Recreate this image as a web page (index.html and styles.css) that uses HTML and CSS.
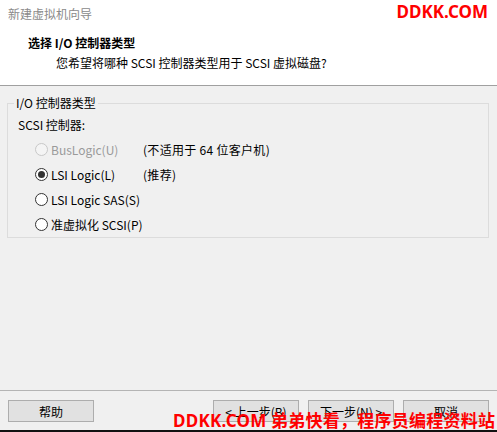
FILE: index.html
```html
<!DOCTYPE html>
<html lang="zh-CN">
<head>
  <meta charset="UTF-8">
  <title>新建虚拟机向导</title>
  <link rel="stylesheet" href="styles.css">
</head>
<body>
  <header>
    <div class="title">新建虚拟机向导</div>
    <div class="logo">DDKK.COM</div>
    <div class="heading">选择 I/O 控制器类型</div>
    <div class="subtitle">您希望将哪种 SCSI 控制器类型用于 SCSI 虚拟磁盘?</div>
  </header>

  <main>
    <fieldset class="group">
      <legend>I/O 控制器类型</legend>
      <div class="label">SCSI 控制器:</div>
      <div class="option disabled">
        <span class="radio"></span><span class="name">BusLogic(U)</span><span class="note">(不适用于 64 位客户机)</span>
      </div>
      <div class="option">
        <span class="radio checked"></span><span class="name">LSI Logic(L)</span><span class="note">(推荐)</span>
      </div>
      <div class="option">
        <span class="radio"></span><span class="name">LSI Logic SAS(S)</span>
      </div>
      <div class="option">
        <span class="radio"></span><span class="name">准虚拟化 SCSI(P)</span>
      </div>
    </fieldset>
  </main>

  <footer>
    <button>帮助</button>
    <div class="nav">
      <button>&lt; 上一步(B)</button>
      <button>下一步(N) &gt;</button>
      <button>取消</button>
    </div>
  </footer>
  <div class="watermark">DDKK.COM 弟弟快看，程序员编程资料站</div>
</body>
</html>
```

FILE: styles.css
```css
* {
  box-sizing: border-box;
}
html, body {
  height: 100%;
}
body {
  margin: 0;
  height: 432px;
  font-family: "Noto Sans CJK SC", sans-serif;
  font-size: 12px;
  line-height: 16px;
  color: #000;
  background: #f0f0f0;
  display: flex;
  flex-direction: column;
  position: relative;
  overflow: hidden;
  border-bottom: 2px solid #111;
}
header {
  background: #fff;
  height: 86px;
  border-bottom: 1px solid #a0a0a0;
  padding: 6px 8px 0;
  position: relative;
}
.title {
  color: #8a8a8a;
}
.logo {
  position: absolute;
  top: 2px;
  right: 9px;
  font-family: "Noto Sans", sans-serif;
  font-weight: bold;
  font-size: 17px;
  line-height: 20px;
  color: #ff0000;
}
.heading {
  margin-top: 13px;
  padding-left: 20px;
  font-weight: bold;
}
.subtitle {
  margin-top: 4px;
  padding-left: 48px;
}
main {
  flex: 1;
}
.group {
  margin: 9px 8px 0 7px;
  padding: 0 0 0 10px;
  border: 1px solid #dcdcdc;
  height: 143px;
}
.group legend {
  padding: 0 2px;
  margin-left: -4px;
  line-height: 16px;
}
.label {
  margin-top: 6px;
  margin-bottom: 4px;
}
.option {
  height: 25px;
  display: flex;
  align-items: center;
  padding-left: 17px;
}
.radio {
  width: 13px;
  height: 13px;
  border: 1px solid #333;
  border-radius: 50%;
  background: #fff;
  margin-right: 3px;
  display: flex;
  align-items: center;
  justify-content: center;
  flex: none;
}
.radio.checked::after {
  content: "";
  width: 7px;
  height: 7px;
  border-radius: 50%;
  background: #333;
}
.name {
  width: 92px;
}
.note {
  letter-spacing: 0.3px;
}
.disabled .radio {
  border-color: #c8c8c8;
  background: #f4f4f4;
}
.disabled .name {
  color: #9a9a9a;
}
footer {
  border-top: 1px solid #b4b4b4;
  padding: 9px 8px 8px;
  display: flex;
  justify-content: space-between;
}
.nav {
  display: flex;
  gap: 9px;
}
button {
  width: 86px;
  height: 22px;
  background: #e1e1e1;
  border: 1px solid #adadad;
  font-family: inherit;
  font-size: 12px;
  color: #000;
  padding: 0;
}
.watermark {
  position: absolute;
  left: 173px;
  bottom: -1px;
  font-family: "Noto Sans", "Noto Sans CJK SC", sans-serif;
  font-weight: bold;
  font-size: 17px;
  line-height: 20px;
  letter-spacing: 0.25px;
  color: #ff0000;
  white-space: nowrap;
}
```
